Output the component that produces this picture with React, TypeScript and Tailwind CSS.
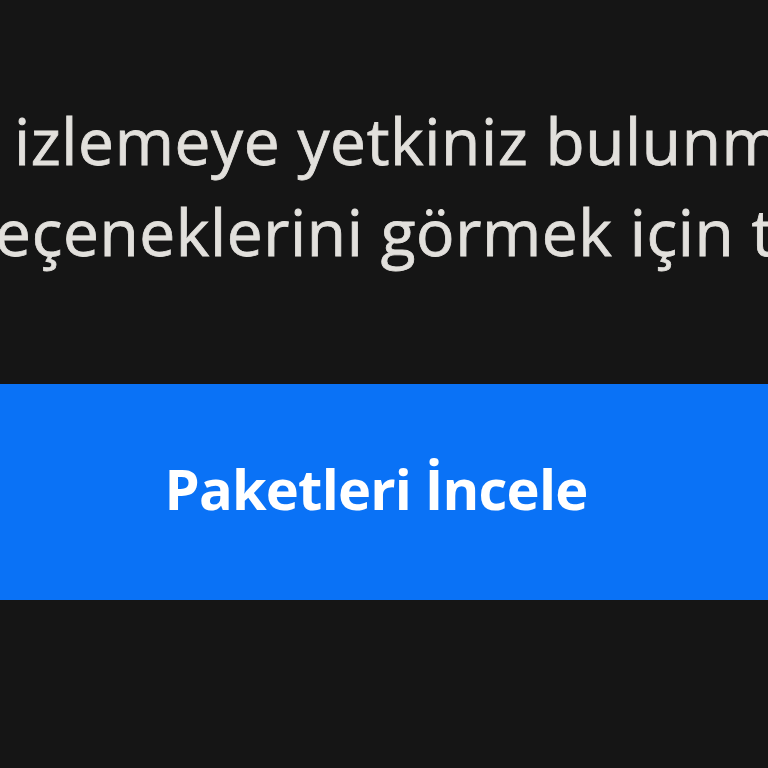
import React from 'react';

const App: React.FC = () => {
  return (
    <div className="flex h-[768px] w-[768px] flex-col overflow-hidden bg-[#151515] font-['Open_Sans','Noto_Sans',sans-serif]">
      <div className="pt-[95px] text-[64px] leading-[91px] tracking-[0.6px] text-[#e2e0dc] [-webkit-text-stroke:0.8px_#e2e0dc]">
        <p className="whitespace-nowrap pl-[14px]">izlemeye yetkiniz bulunmamaktadır.</p>
        <p className="-ml-[36px] whitespace-nowrap">seçeneklerini görmek için tıklayınız.</p>
      </div>

      <button className="mt-[107px] flex h-[216px] w-full items-center justify-center bg-[#0a72f6] pr-[16px] pb-[8px] text-[56px] font-bold tracking-[-0.8px] text-white">
        Paketleri İncele
      </button>
    </div>
  );
};

export default App;
